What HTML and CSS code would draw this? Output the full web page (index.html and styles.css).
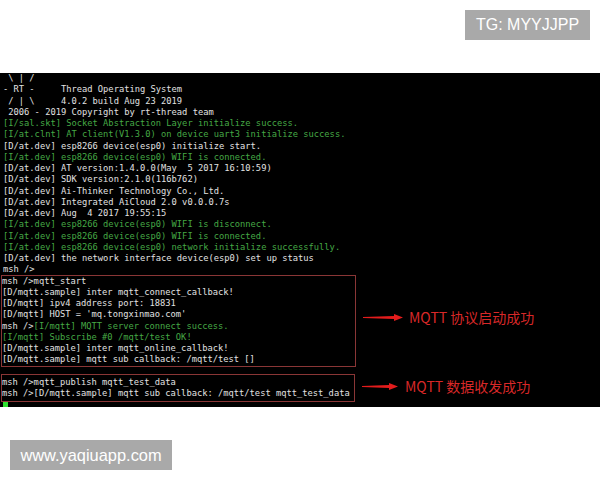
FILE: index.html
```html
<!DOCTYPE html>
<html>
<head>
<meta charset="utf-8">
<link rel="stylesheet" href="styles.css">
</head>
<body>
<div class="top">
  <div class="badge badge-tg">TG: MYYJJPP</div>
</div>
<div class="term">
  <div class="ln"> \ | /</div>
  <div class="ln">- RT -     Thread Operating System</div>
  <div class="ln"> / | \     4.0.2 build Aug 23 2019</div>
  <div class="ln"> 2006 - 2019 Copyright by rt-thread team</div>
  <div class="ln g">[I/sal.skt] Socket Abstraction Layer initialize success.</div>
  <div class="ln g">[I/at.clnt] AT client(V1.3.0) on device uart3 initialize success.</div>
  <div class="ln">[D/at.dev] esp8266 device(esp0) initialize start.</div>
  <div class="ln g">[I/at.dev] esp8266 device(esp0) WIFI is connected.</div>
  <div class="ln">[D/at.dev] AT version:1.4.0.0(May  5 2017 16:10:59)</div>
  <div class="ln">[D/at.dev] SDK version:2.1.0(116b762)</div>
  <div class="ln">[D/at.dev] Ai-Thinker Technology Co., Ltd.</div>
  <div class="ln">[D/at.dev] Integrated AiCloud 2.0 v0.0.0.7s</div>
  <div class="ln">[D/at.dev] Aug  4 2017 19:55:15</div>
  <div class="ln g">[I/at.dev] esp8266 device(esp0) WIFI is disconnect.</div>
  <div class="ln g">[I/at.dev] esp8266 device(esp0) WIFI is connected.</div>
  <div class="ln g">[I/at.dev] esp8266 device(esp0) network initialize successfully.</div>
  <div class="ln">[D/at.dev] the network interface device(esp0) set up status</div>
  <div class="ln">msh /&gt;</div>
  <div class="box box1">
    <div class="ln">msh /&gt;mqtt_start</div>
    <div class="ln">[D/mqtt.sample] inter mqtt_connect_callback!</div>
    <div class="ln">[D/mqtt] ipv4 address port: 18831</div>
    <div class="ln">[D/mqtt] HOST = 'mq.tongxinmao.com'</div>
    <div class="ln">msh /&gt;<span class="g">[I/mqtt] MQTT server connect success.</span></div>
    <div class="ln g">[I/mqtt] Subscribe #0 /mqtt/test OK!</div>
    <div class="ln">[D/mqtt.sample] inter mqtt_online_callback!</div>
    <div class="ln">[D/mqtt.sample] mqtt sub callback: /mqtt/test []</div>
  </div>
  <div class="ln"> </div>
  <div class="box box2">
    <div class="ln">msh /&gt;mqtt_publish mqtt_test_data</div>
    <div class="ln">msh /&gt;[D/mqtt.sample] mqtt sub callback: /mqtt/test mqtt_test_data</div>
  </div>
  <div class="ln"><span class="cursor"></span></div>

  <div class="note note1">
    <svg class="arrow" width="40" height="7" viewBox="0 0 40 7"><polygon points="0,3 31,2 31,0 40,3.5 31,7 31,5 0,4" fill="#e31c1c"/></svg>
    <span class="note-text">MQTT 协议启动成功</span>
  </div>
  <div class="note note2">
    <svg class="arrow" width="36" height="7" viewBox="0 0 36 7"><polygon points="0,3 27,2 27,0 36,3.5 27,7 27,5 0,4" fill="#e31c1c"/></svg>
    <span class="note-text">MQTT 数据收发成功</span>
  </div>
</div>
<div class="bottom">
  <div class="badge badge-www">www.yaqiuapp.com</div>
</div>
</body>
</html>
```

FILE: styles.css
```css
html, body {
  margin: 0;
  padding: 0;
  background: #ffffff;
}

body {
  width: 600px;
  height: 480px;
  overflow: hidden;
  font-family: "Liberation Sans", Arial, sans-serif;
}

.top {
  height: 73px;
  box-sizing: border-box;
  padding: 10px 10px 0 0;
  display: flex;
  justify-content: flex-end;
  align-items: flex-start;
}

.badge {
  background: #a9a9a9;
  color: #ffffff;
  font-family: "Liberation Sans", Arial, sans-serif;
  font-size: 16px;
  height: 30px;
  line-height: 30px;
  text-align: center;
  box-sizing: border-box;
}

.badge-tg {
  width: 125px;
}

.badge-www {
  width: 162px;
  font-size: 16.4px;
}

.term {
  position: relative;
  height: 334px;
  background: #000000;
  overflow: hidden;
  box-sizing: border-box;
  padding: 0 0 0 3px;
  font-family: "DejaVu Sans Mono", monospace;
  font-size: 8.75px;
  line-height: 11.25px;
  color: #e2e2e2;
}

.ln {
  white-space: pre;
  height: 11.25px;
}

.g {
  color: #45a845;
}

.box {
  margin-left: -1px;
  box-shadow: 0 0 0 1px #8a3636;
}

.box1 {
  width: 353px;
}

.box2 {
  width: 352px;
  padding: 2px 0;
  margin-top: -2px;
  margin-bottom: -2px;
}

.cursor {
  display: inline-block;
  width: 5px;
  height: 9px;
  margin-top: 3px;
  background: #2fe02f;
  vertical-align: top;
}

.note {
  position: absolute;
  display: flex;
  align-items: center;
  font-family: "Noto Sans CJK SC", "Noto Sans", sans-serif;
  font-size: 14px;
  color: #d82828;
}

.note1 {
  left: 363px;
  top: 234px;
  gap: 6px;
}

.note2 {
  left: 362px;
  top: 303px;
  gap: 7px;
}

.arrow {
  display: block;
}

.note-text {
  line-height: 20px;
}

.bottom {
  padding: 33px 0 0 10px;
}
```
